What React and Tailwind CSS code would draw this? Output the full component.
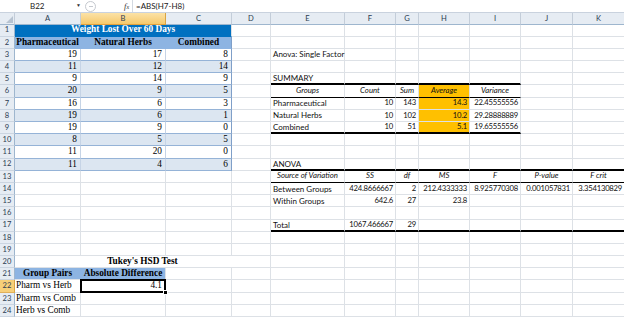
import React from "react";

const COLS = ["A", "B", "C", "D", "E", "F", "G", "H", "I", "J", "K"];

// fonts
const T = "font-['Liberation_Serif','Times_New_Roman',serif] text-[9.3px] text-black";
const TB = "font-['Liberation_Serif','Times_New_Roman',serif] text-[9.3px] text-black font-bold justify-center";
const S = "font-['Lato','Liberation_Sans',sans-serif] text-[8px] text-[#111] pl-[2px]";
const SI = "font-['Lato','Liberation_Sans',sans-serif] text-[7.8px] text-[#111] italic justify-center";
const N = "font-['Lato','Liberation_Sans',sans-serif] text-[7.7px] tracking-[-0.25px] text-[#111] justify-end pr-[2px]";

// borders
const GRID = "border-r border-b border-r-[#dde1e6] border-b-[#dde1e6]";
const THICK = "border-r border-b-2 border-r-[#dde1e6] border-b-black";
const THIN = "border-r border-b border-r-[#dde1e6] border-b-black";
const TBL = "border-r border-b border-r-[#c6d4e6] border-b-[#95b3d7]";
const TBL_END = "border-r border-b border-r-[#7f9fc8] border-b-[#95b3d7]";

const weights = [
  [19, 17, 8],
  [11, 12, 14],
  [9, 14, 9],
  [20, 9, 5],
  [16, 6, 3],
  [19, 6, 1],
  [19, 9, 0],
  [8, 5, 5],
  [11, 20, 0],
  [11, 4, 6],
];

const cells = {};
const put = (ref, t, cls, span = 1) => {
  cells[ref] = { t, cls, span };
};

// weight table
put("A1", "Weight Lost Over 60 Days", `${TB} text-white bg-[#0070c0] border-r border-b border-r-[#dde1e6] border-b-[#0070c0]`, 3);
put("A2", "Pharmaceutical", `${TB} bg-[#8db4e2] border-r border-b border-r-[#8db4e2] border-b-[#8db4e2]`);
put("B2", "Natural Herbs", `${TB} bg-[#8db4e2] border-r border-b border-r-[#8db4e2] border-b-[#8db4e2]`);
put("C2", "Combined", `${TB} bg-[#8db4e2] border-r border-b border-r-[#7f9fc8] border-b-[#8db4e2]`);
weights.forEach((w, i) => {
  const r = i + 3;
  const bg = r % 2 === 0 ? "bg-[#dce6f1]" : "bg-white";
  put(`A${r}`, w[0], `${T} ${bg} ${TBL} justify-end pr-[3px]`);
  put(`B${r}`, w[1], `${T} ${bg} ${TBL} justify-end pr-[3px]`);
  put(`C${r}`, w[2], `${T} ${bg} ${TBL_END} justify-end pr-[3px]`);
});

// anova single factor summary
put("E3", "Anova: Single Factor", `${S} ${GRID}`);
put("E5", "SUMMARY", `${S} ${THICK}`);
["F5", "G5", "H5", "I5"].forEach((r) => put(r, "", THICK));
put("E6", "Groups", `${SI} ${THIN}`);
put("F6", "Count", `${SI} ${THIN}`);
put("G6", "Sum", `${SI} ${THIN}`);
put("H6", "Average", `${SI} ${THIN} bg-[#ffc000]`);
put("I6", "Variance", `${SI} ${THIN}`);

const summary = [
  ["Pharmaceutical", "10", "143", "14.3", "22.45555556"],
  ["Natural Herbs", "10", "102", "10.2", "29.28888889"],
  ["Combined", "10", "51", "5.1", "19.65555556"],
];
summary.forEach((s, i) => {
  const r = i + 7;
  const b = r === 9 ? THICK : GRID;
  put(`E${r}`, s[0], `${S} ${b}`);
  put(`F${r}`, s[1], `${N} ${b}`);
  put(`G${r}`, s[2], `${N} ${b}`);
  put(`H${r}`, s[3], `${N} ${b} bg-[#ffc000]`);
  put(`I${r}`, s[4], `${N} ${b}`);
});

// anova table
put("E12", "ANOVA", `${S} ${THICK}`);
["F12", "G12", "H12", "I12", "J12", "K12"].forEach((r) => put(r, "", THICK));
["Source of Variation", "SS", "df", "MS", "F", "P-value", "F crit"].forEach((h, i) =>
  put(`${COLS[i + 4]}13`, h, `${SI} ${THIN}`)
);
const anova = [
  [14, ["Between Groups", "424.8666667", "2", "212.4333333", "8.925770308", "0.001057831", "3.354130829"]],
  [15, ["Within Groups", "642.6", "27", "23.8", "", "", ""]],
  [16, ["", "", "", "", "", "", ""]],
  [17, ["Total", "1067.466667", "29", "", "", "", ""]],
];
anova.forEach(([r, vals]) => {
  const b = r === 17 ? THICK : GRID;
  vals.forEach((v, i) => put(`${COLS[i + 4]}${r}`, v, `${i === 0 ? S : N} ${b}`));
});

// tukey
put("A20", "Tukey's HSD Test", `${TB} ${GRID}`, 4);
put("A21", "Group Pairs", `${TB} bg-[#8db4e2] border-r border-b border-r-[#8db4e2] border-b-[#dde1e6]`);
put("B21", "Absolute Difference", `${TB} bg-[#8db4e2] border-r border-b border-r-[#dde1e6] border-b-[#dde1e6]`);
put("A22", "Pharm vs Herb", `${T} ${GRID} pl-[1px]`);
put("B22", "4.1", `${T} ${GRID} justify-end pr-[3px] relative`);
put("A23", "Pharm vs Comb", `${T} ${GRID} pl-[1px]`);
put("A24", "Herb vs Comb", `${T} ${GRID} pl-[1px]`);

function FormulaBar() {
  return (
    <div className="h-[13px] flex items-center bg-white border-b border-[#c9d2de] font-['Lato','Liberation_Sans',sans-serif]">
      <div className="w-[84px] h-full flex items-center">
        <span className="ml-[30px] text-[8px] text-[#222]">B22</span>
        <span className="ml-auto mr-[3px] text-[5px] text-[#333]">▼</span>
      </div>
      <div className="w-[11px] h-[11px] rounded-full border border-[#c5c9cf] flex items-center justify-center ml-[1px]">
        <div className="w-[4px] h-px bg-[#c5c9cf]" />
      </div>
      <span className="ml-[28px] text-[8.5px] italic font-['Liberation_Serif',serif] text-[#333]">
        f<span className="text-[6px]">x</span>
      </span>
      <div className="ml-[3px] h-full border-l border-[#d3d9e1] flex items-center pl-[3px]">
        <span className="text-[8px] text-[#222]">=ABS(H7-H8)</span>
      </div>
    </div>
  );
}

function Corner() {
  return (
    <div className="relative bg-[#e6ecf3] border-r border-b border-r-[#c3cdd9] border-b-[#9eb6ce]">
      <svg className="absolute right-[1px] bottom-[1px]" width="7" height="7" viewBox="0 0 7 7">
        <path d="M7 0 L7 7 L0 7 Z" fill="#b7c3d1" />
      </svg>
    </div>
  );
}

export default function App() {
  const rows = [];
  for (let r = 1; r <= 24; r++) {
    rows.push(
      <div
        key={`h${r}`}
        className={`flex items-center justify-center border-r border-b font-['Lato','Liberation_Sans',sans-serif] text-[7.6px] text-[#2c3d52] ${
          r === 22
            ? "bg-[#f7cf78] border-r-[#d9a443] border-b-[#e0b05a]"
            : "bg-[#e6ecf3] border-r-[#9eb6ce] border-b-[#cbd5e1]"
        }`}
      >
        {r}
      </div>
    );
    for (let c = 0; c < COLS.length; c++) {
      const ref = `${COLS[c]}${r}`;
      const cell = cells[ref];
      if (!cell) {
        // hidden by a merge to the left?
        const covered =
          (r === 1 && c > 0 && c < 3) || (r === 20 && c > 0 && c < 4);
        if (covered) continue;
        rows.push(<div key={ref} className={GRID} />);
        continue;
      }
      rows.push(
        <div
          key={ref}
          className={`flex items-center min-w-0 whitespace-nowrap leading-none ${cell.cls} ${
            cell.span === 3 ? "col-span-3" : cell.span === 4 ? "col-span-4" : ""
          }`}
        >
          <span className="shrink-0">{cell.t}</span>
          {ref === "B22" && (
            <>
              <div className="absolute -left-px -top-px -right-px -bottom-px border-2 border-black" />
              <div className="absolute -right-[3px] -bottom-[3px] w-[5px] h-[5px] bg-black border border-white" />
            </>
          )}
        </div>
      );
    }
  }

  return (
    <div className="w-[624px] h-[317px] overflow-hidden bg-white">
      <FormulaBar />
      <div className="grid grid-cols-[15px_66px_85px_66px_39px_74px_51px_23px_51px_51px_52px_52px] grid-rows-[11.5px_repeat(24,12.19px)]">
        <Corner />
        {COLS.map((c) => (
          <div
            key={c}
            className={`flex items-center justify-center border-r border-b font-['Lato','Liberation_Sans',sans-serif] text-[7.6px] text-[#2c3d52] ${
              c === "B"
                ? "bg-linear-to-b from-[#fbe2a6] to-[#f6c96b] border-r-[#d9a443] border-b-[#e2a13c]"
                : "bg-[#e6ecf3] border-r-[#c3cdd9] border-b-[#9eb6ce]"
            }`}
          >
            {c}
          </div>
        ))}
        {rows}
      </div>
    </div>
  );
}
